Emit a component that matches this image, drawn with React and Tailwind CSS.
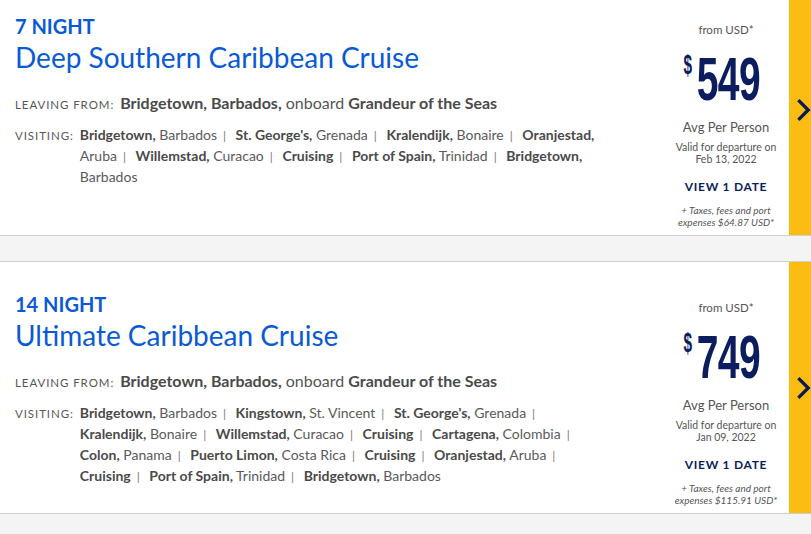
const cruises = [
  {
    nights: "7 NIGHT",
    name: "Deep Southern Caribbean Cruise",
    from: "Bridgetown, Barbados,",
    ship: "Grandeur of the Seas",
    ports: [
      ["Bridgetown,", "Barbados"],
      ["St. George's,", "Grenada"],
      ["Kralendijk,", "Bonaire"],
      ["Oranjestad,", "Aruba"],
      ["Willemstad,", "Curacao"],
      ["Cruising"],
      ["Port of Spain,", "Trinidad"],
      ["Bridgetown,", "Barbados"],
    ],
    price: "549",
    date: "Feb 13, 2022",
    taxes: "$64.87",
  },
  {
    nights: "14 NIGHT",
    name: "Ultimate Caribbean Cruise",
    from: "Bridgetown, Barbados,",
    ship: "Grandeur of the Seas",
    ports: [
      ["Bridgetown,", "Barbados"],
      ["Kingstown,", "St. Vincent"],
      ["St. George's,", "Grenada"],
      ["Kralendijk,", "Bonaire"],
      ["Willemstad,", "Curacao"],
      ["Cruising"],
      ["Cartagena,", "Colombia"],
      ["Colon,", "Panama"],
      ["Puerto Limon,", "Costa Rica"],
      ["Cruising"],
      ["Oranjestad,", "Aruba"],
      ["Cruising"],
      ["Port of Spain,", "Trinidad"],
      ["Bridgetown,", "Barbados"],
    ],
    price: "749",
    date: "Jan 09, 2022",
    taxes: "$115.91",
  },
];

function Chevron() {
  return (
    <svg width="16" height="26" viewBox="0 0 16 26" fill="none">
      <path d="M2.5 2.5l10.5 10.5L2.5 23.5" stroke="#0c1a52" strokeWidth="3.6" />
    </svg>
  );
}

function CruiseCard({ c }) {
  return (
    <div className="flex bg-white border-y border-[#cfcfcf] h-[253px]">
      {/* details */}
      <div className="flex-1 pl-[15px] pt-[30px]">
        <div className="text-[20px] leading-[24px] font-bold text-[#0a5ad6]">{c.nights}</div>
        <div className="text-[28px] leading-[32px] text-[#0a5ad6] mt-[3px]">{c.name}</div>
        <div className="mt-[18px] flex items-baseline text-[16px] text-[#555]">
          <span className="text-[11.5px] tracking-[0.08em] text-[#555] mr-[6px]">LEAVING FROM:</span>
          <span>
            <b className="font-bold text-[#4a4a4a]">{c.from}</b> onboard{" "}
            <b className="font-bold text-[#4a4a4a]">{c.ship}</b>
          </span>
        </div>
        <div className="mt-[10px] flex text-[14px] leading-[20px] text-[#5a5a5a]">
          <span className="text-[11.5px] tracking-[0.08em] mr-[6px] shrink-0 pt-[1px]">VISITING:</span>
          <p className="w-[527px]">
            {c.ports.map((p, i) => (
              <span key={i}>
                <b className="font-bold text-[#4a4a4a]">{p[0]}</b>
                {p[1] ? " " + p[1] : ""}
                {i < c.ports.length - 1 && <span className="text-[#777] mx-[6px] text-[12px]">|</span>}{" "}
              </span>
            ))}
          </p>
        </div>
      </div>
      {/* price */}
      <div className="w-[126px] shrink-0 flex flex-col items-center pt-[38px] text-[#555]">
        <div className="text-[11.5px] leading-[16px]">from USD*</div>
        <div className="flex items-start justify-center text-[#0b1d5e] mt-[18px] h-[56px] font-['Liberation_Sans',sans-serif] font-bold">
          <span className="text-[28px] leading-[24px] scale-x-[0.55] -mt-[3px]">$</span>
          <span className="text-[61px] leading-[46px] scale-x-[0.64] tracking-[-1px] ml-[-17px] mr-[-6px]">{c.price}</span>
        </div>
        <div className="text-[13px] leading-[16px] mt-[7px]">Avg Per Person</div>
        <div className="text-[10.5px] leading-[12px] mt-[6px] text-center">
          Valid for departure on
          <br />
          {c.date}
        </div>
        <div className="text-[12px] font-bold tracking-[0.06em] text-[#0b1d5e] mt-[14px] leading-[16px]">VIEW 1 DATE</div>
        <div className="text-[10px] italic leading-[12px] mt-[9px] text-center whitespace-nowrap">
          + Taxes, fees and port
          <br />
          expenses {c.taxes} USD*
        </div>
      </div>
      {/* arrow */}
      <div className="w-[22px] shrink-0 bg-[#fbbd12] flex items-center overflow-hidden pl-[7px]">
        <Chevron />
      </div>
    </div>
  );
}

export default function App() {
  return (
    <div className="w-[811px] h-[534px] overflow-hidden bg-[#f4f4f4] font-['Lato',sans-serif]">
      <div className="-mt-[17px] flex flex-col gap-[25px]">
        {cruises.map((c) => (
          <CruiseCard key={c.name} c={c} />
        ))}
      </div>
    </div>
  );
}
